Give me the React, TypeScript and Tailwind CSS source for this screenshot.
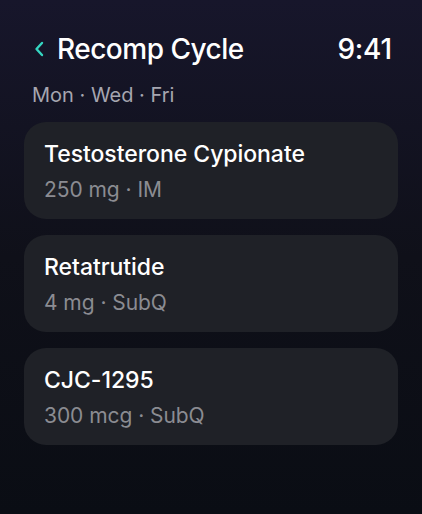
const doses = [
  { name: "Testosterone Cypionate", detail: "250 mg · IM" },
  { name: "Retatrutide", detail: "4 mg · SubQ" },
  { name: "CJC-1295", detail: "300 mcg · SubQ" },
]

function BackChevron() {
  return (
    <svg width="10" height="16" viewBox="0 0 10 16" fill="none" className="text-[#35d6c1]">
      <path d="M8 2L2.5 8L8 14" stroke="currentColor" strokeWidth="2.4" strokeLinecap="round" strokeLinejoin="round" />
    </svg>
  )
}

export default function App() {
  return (
    <div
      className="h-[514px] w-[422px] overflow-hidden bg-gradient-to-b from-[#17162b] via-[#0f1019] to-[#0a0d14] px-6 text-white"
      style={{ fontFamily: "Inter, 'Noto Sans', sans-serif" }}
    >
      <div className="flex items-center justify-between pl-[10px] pr-[6px] pt-[32px]">
        <div className="flex items-center gap-[13px]">
          <BackChevron />
          <h1 className="text-[28px] font-medium leading-[34px] tracking-[-0.5px]">Recomp Cycle</h1>
        </div>
        <span className="text-[28px] font-medium leading-[34px] tracking-[-0.2px]">9:41</span>
      </div>
      <p className="mt-[17px] pl-2 text-[20px] leading-[24px] text-[#a6a6b0]">Mon · Wed · Fri</p>
      <div className="mt-[15px] flex flex-col gap-4">
        {doses.map((d) => (
          <div key={d.name} className="flex flex-col rounded-[22px] bg-[#1f2127] px-5 pb-[16px] pt-[18px]">
            <p className="text-[23px] font-medium leading-[28px] tracking-[-0.05px]">{d.name}</p>
            <p className="mt-[9px] text-[21px] leading-[26px] tracking-[-0.05px] text-[#8b8c92]">{d.detail}</p>
          </div>
        ))}
      </div>
    </div>
  )
}
